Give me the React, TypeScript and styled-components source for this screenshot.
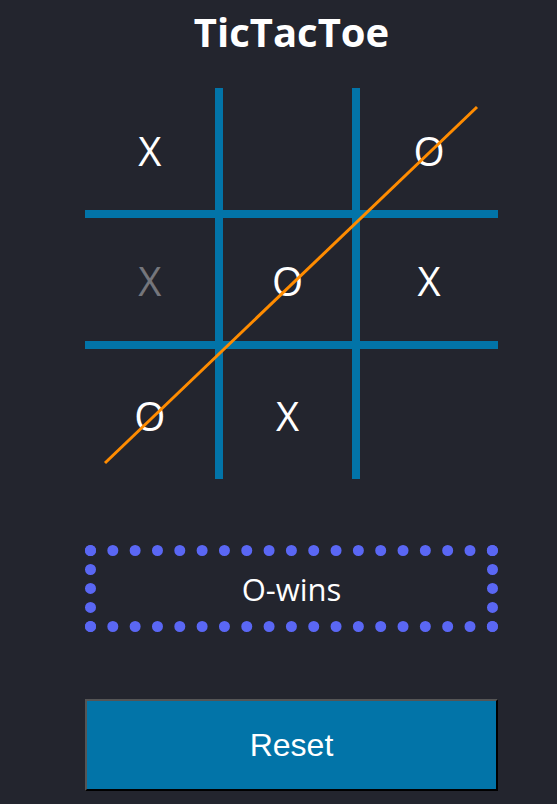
import React from "react";
import styled, { createGlobalStyle } from "styled-components";

const GlobalStyle = createGlobalStyle`
  html, body {
    margin: 0;
    padding: 0;
    background: #23252e;
  }
  body {
    font-family: "Open Sans", "Noto Sans", sans-serif;
    color: #ffffff;
  }
`;

const Page = styled.main`
  box-sizing: border-box;
  width: 557px;
  min-height: 804px;
  padding: 12px 59px 0 85px;
  display: flex;
  flex-direction: column;
  align-items: stretch;
`;

const Title = styled.h1`
  margin: 0 0 36px;
  font-family: "Open Sans", sans-serif;
  font-weight: 700;
  font-size: 40px;
  line-height: 40px;
  text-align: center;
  color: #ffffff;
`;

const BoardWrap = styled.div`
  position: relative;
  width: 413px;
  height: 391px;
`;

const Board = styled.div`
  display: grid;
  grid-template-columns: repeat(3, 1fr);
  grid-template-rows: repeat(3, 1fr);
  width: 100%;
  height: 100%;
`;

const Cell = styled.div<{ $right: boolean; $bottom: boolean; $ghost?: boolean }>`
  box-sizing: border-box;
  display: flex;
  align-items: center;
  justify-content: center;
  padding-top: 3px;
  border-right: ${(p) => (p.$right ? "8px solid #0274a8" : "none")};
  border-bottom: ${(p) => (p.$bottom ? "8px solid #0274a8" : "none")};
  font-family: "Open Sans", sans-serif;
  font-size: 40px;
  color: ${(p) => (p.$ghost ? "rgba(255,255,255,0.38)" : "#ffffff")};
`;

const WinLine = styled.svg`
  position: absolute;
  left: 0;
  top: 0;
  width: 100%;
  height: 100%;
  pointer-events: none;
`;

const Status = styled.div`
  box-sizing: border-box;
  margin-top: 66px;
  height: 87px;
  border: 11px dotted #5a67f4;
  display: flex;
  align-items: center;
  justify-content: center;
  font-family: "Open Sans", sans-serif;
  font-size: 31px;
  color: #ffffff;
`;

const ResetButton = styled.button`
  box-sizing: border-box;
  margin-top: 67px;
  height: 92px;
  width: 413px;
  background: #0274a8;
  border: 2px solid;
  border-color: #555555 #000000 #000000 #555555;
  color: #ffffff;
  font-family: "Liberation Sans", Arial, sans-serif;
  font-size: 32px;
  cursor: pointer;
`;

const cells: { v: string; ghost?: boolean }[] = [
  { v: "X" }, { v: "" }, { v: "O" },
  { v: "X", ghost: true }, { v: "O" }, { v: "X" },
  { v: "O" }, { v: "X" }, { v: "" },
];

export default function App() {
  return (
    <>
      <GlobalStyle />
      <Page>
        <Title>TicTacToe</Title>
        <BoardWrap>
          <Board>
            {cells.map((c, i) => (
              <Cell key={i} $right={i % 3 !== 2} $bottom={i < 6} $ghost={c.ghost}>
                {c.v}
              </Cell>
            ))}
          </Board>
          <WinLine viewBox="0 0 413 391">
            <line x1="20" y1="375" x2="392" y2="19" stroke="#ff8c00" strokeWidth="3" />
          </WinLine>
        </BoardWrap>
        <Status>O-wins</Status>
        <ResetButton>Reset</ResetButton>
      </Page>
    </>
  );
}
